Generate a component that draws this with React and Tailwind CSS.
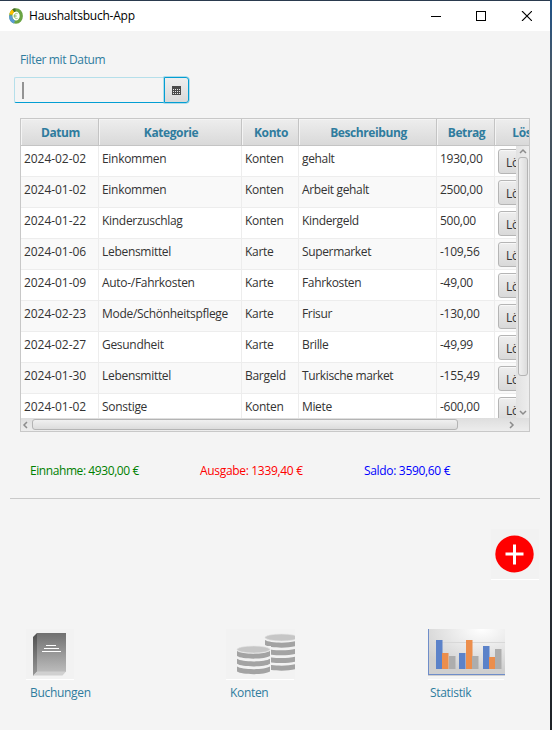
import React from "react";

const rows = [
  ["2024-02-02", "Einkommen", "Konten", "gehalt", "1930,00"],
  ["2024-01-02", "Einkommen", "Konten", "Arbeit gehalt", "2500,00"],
  ["2024-01-22", "Kinderzuschlag", "Konten", "Kindergeld", "500,00"],
  ["2024-01-06", "Lebensmittel", "Karte", "Supermarket", "-109,56"],
  ["2024-01-09", "Auto-/Fahrkosten", "Karte", "Fahrkosten", "-49,00"],
  ["2024-02-23", "Mode/Schönheitspflege", "Karte", "Frisur", "-130,00"],
  ["2024-02-27", "Gesundheit", "Karte", "Brille", "-49,99"],
  ["2024-01-30", "Lebensmittel", "Bargeld", "Turkische market", "-155,49"],
  ["2024-01-02", "Sonstige", "Konten", "Miete", "-600,00"],
];

const headers = ["Datum", "Kategorie", "Konto", "Beschreibung", "Betrag", "Löschen"];
const columns = "grid grid-cols-[78px_143px_57px_138px_58px_80px]";
const cellTracking = [
  "tracking-[-0.05px]",
  "tracking-[-0.3px]",
  "tracking-[-0.3px]",
  "tracking-[-0.35px]",
  "tracking-[-0.25px]",
];

function AppLogo() {
  return (
    <svg width="14" height="16" viewBox="0 0 14 16" className="shrink-0">
      <ellipse cx="7" cy="8" rx="5.3" ry="6.2" fill="#fff" stroke="#6aa443" strokeWidth="3.2" />
      <path d="M1.7 7.5A5.3 6.2 0 0 0 5.5 14" fill="none" stroke="#5b9bd5" strokeWidth="3.2" />
      <path d="M1.9 6.5A5.3 6.2 0 0 1 4.3 2.6" fill="none" stroke="#ffc000" strokeWidth="3.2" />
      <path d="M4.3 2.6A5.3 6.2 0 0 1 6.5 1.8" fill="none" stroke="#43682b" strokeWidth="3.2" />
      <path d="M8.7 5.7C6.4 4.6 5.4 6.3 5.4 8s1 3.4 3.3 2.3M4.6 7.3h3M4.6 8.7h3" fill="none" stroke="#8cb96c" strokeWidth=".8" />
    </svg>
  );
}

function TitleBar() {
  return (
    <header className="flex h-[31px] shrink-0 items-center border-t border-[#2a3a4e] bg-white pl-[9px] pr-[18px]">
      <AppLogo />
      <h1 className="ml-[6px] text-[12px] leading-4 tracking-[-0.22px] text-black">Haushaltsbuch-App</h1>
      <svg className="ml-auto" width="101" height="10" viewBox="0 0 101 10" fill="none" stroke="#000">
        <path d="M0 5.5h10" shapeRendering="crispEdges" />
        <path d="M45.5.5h9v9h-9z" shapeRendering="crispEdges" />
        <path d="M91 0l10 10M101 0L91 10" strokeWidth="1.1" />
      </svg>
    </header>
  );
}

function DatePicker() {
  return (
    <div className="ml-[14px] mt-[8px] flex h-[26px] w-[175px]">
      <div className="flex w-[150px] items-center rounded-l-[2px] border-b border-l border-t border-b-[#039ed3] border-l-[#b5dfea] border-t-[#b5dfea] pl-[7px]">
        <span className="h-[17px] w-[2px] bg-[#939393]" />
      </div>
      <button className="flex w-[25px] items-center justify-center rounded-r-[3px] border border-[#039ed3] bg-linear-to-b from-[#eeeeee] to-[#d9d9d9] shadow-[0_0_0_0.5px_#6cc4df]">
        <svg width="9" height="9" viewBox="0 0 9 9" shapeRendering="crispEdges">
          <path d="M0 0h9v9H0z" fill="#4a4a4a" />
          <path d="M1 3h1v1H1zM3 3h1v1H3zM5 3h1v1H5zM7 3h1v1H7zM1 5h1v1H1zM3 5h1v1H3zM5 5h1v1H5zM7 5h1v1H7zM1 7h1v1H1zM3 7h1v1H3zM5 7h1v1H5zM7 7h1v1H7z" fill="#e6e6e6" />
        </svg>
      </button>
    </div>
  );
}

function Chevron({ d }) {
  return (
    <svg width="8" height="8" viewBox="0 0 8 8" fill="none" stroke="#8c8c8c" strokeWidth="1.5" className="shrink-0">
      <path d={d} />
    </svg>
  );
}

function Table() {
  return (
    <section className="ml-5 mt-[15px] flex h-[314px] w-[510px] shrink-0 flex-col overflow-hidden border border-[#c8c8c8] bg-white">
      <div className={`${columns} h-[27px] w-[554px] shrink-0 text-[12px] font-bold text-[#2f7c9e]`}>
        {headers.map((h) => (
          <div key={h} className="flex items-center justify-center border-b border-r border-[#c4c4c4] bg-linear-to-b from-[#eeeeee] to-[#d9d9d9] pl-[2px] pt-[2px] tracking-[-0.4px] shadow-[inset_1px_1px_0_#f4f4f4]">
            {h}
          </div>
        ))}
      </div>
      <div className="flex h-[272px] shrink-0">
        <div className="w-[495px] overflow-hidden text-[12px] text-[#333]">
          {rows.map((row, i) => (
            <div key={i} className={`${columns} h-[31px] w-[554px] ${i % 2 ? "bg-[#f9f9f9]" : "bg-white"}`}>
              {row.map((cell, j) => (
                <div key={j} className={`whitespace-nowrap border-b border-r border-[#ededed] pl-[3px] pt-[4px] leading-[18px] ${cellTracking[j]}`}>
                  {cell}
                </div>
              ))}
              <div className="border-b border-[#ededed] pl-[3px] pt-[3px]">
                <button className="h-[25px] w-[60px] rounded-[3px] border border-[#b5b5b5] bg-linear-to-b from-[#eeeeee] to-[#d9d9d9] pl-[7px] text-left leading-[25px] tracking-[-0.2px] shadow-[inset_0_1px_0_#f8f8f8]">
                  Löschen
                </button>
              </div>
            </div>
          ))}
        </div>
        <div className="flex w-[13px] flex-col items-center bg-linear-to-r from-[#e2e2e2] to-[#ededed] pt-[1px]">
          <Chevron d="M1 6l3-3 3 3" />
          <div className="mt-[2px] h-[219px] w-[10px] rounded-[3px] border border-[#b4b4b4] bg-linear-to-r from-[#f0f0f0] to-[#dcdcdc]" />
          <div className="mb-px mt-auto flex">
            <Chevron d="M1 2l3 3 3-3" />
          </div>
        </div>
      </div>
      <div className="flex h-[13px] shrink-0 items-center bg-linear-to-b from-[#dedede] to-[#ededed]">
        <Chevron d="M6 1L3 4l3 3" />
        <div className="ml-[3px] h-[11px] w-[426px] rounded-[3px] border border-[#b4b4b4] bg-linear-to-b from-[#f0f0f0] to-[#dcdcdc]" />
        <div className="ml-auto mr-[13px] flex">
          <Chevron d="M2 1l3 3-3 3" />
        </div>
      </div>
    </section>
  );
}

function Summary() {
  return (
    <div className="mt-[30px] flex h-[18px] shrink-0 whitespace-nowrap pl-[30px] text-[12px] leading-[18px] tracking-[-0.32px]">
      <span className="w-[170px] tracking-[-0.42px] text-[#008000]">Einnahme: 4930,00 €</span>
      <span className="w-[164px] text-[#ff0000]">Ausgabe: 1339,40 €</span>
      <span className="text-[#0000ff]">Saldo: 3590,60 €</span>
    </div>
  );
}

function AddButton() {
  return (
    <button className="ml-[491px] mt-[30px] flex h-[51px] w-[48px] shrink-0 items-center justify-center border-b border-white bg-[#f2f2f2]">
      <svg width="40" height="40" viewBox="0 0 40 40" className="-mt-px">
        <ellipse cx="19.5" cy="20" rx="19.2" ry="18.5" fill="#f00" />
        <path d="M10.5 20h18M19.5 10.5v20" stroke="#fff" strokeWidth="3" />
      </svg>
    </button>
  );
}

function BookIcon() {
  return (
    <svg width="48" height="51" viewBox="0 0 48 51">
      <defs>
        <linearGradient id="cover" x1="0" y1="0" x2="0" y2="1">
          <stop stopColor="#707070" />
          <stop offset="1" stopColor="#bcbcbc" />
        </linearGradient>
        <linearGradient id="spine" x1="0" y1="0" x2="0" y2="1">
          <stop stopColor="#505050" />
          <stop offset="1" stopColor="#979797" />
        </linearGradient>
      </defs>
      <path d="M0 0h48v50H0z" fill="#f2f2f2" />
      <path d="M0 50h48v1H0z" fill="#fff" />
      <path d="M7 8l4-4v39l-4 4z" fill="url(#spine)" />
      <path d="M11 4h29v39H11z" fill="url(#cover)" />
      <path d="M11 42.500h29l-3.500 4H7z" fill="#d0d0d0" />
      <path d="M20 16.500h10M18 19.500h15M16 22.500h19" stroke="#fff" />
    </svg>
  );
}

function CoinStack({ x, y, layers, first, pitch }) {
  return (
    <g transform={`translate(${x} ${y})`}>
      {Array.from({ length: layers }, (_, i) => (
        <path
          key={i}
          d="M0 0C5 3.500 28 3.500 33 0V5C28 8.500 5 8.500 0 5z"
          transform={`translate(0 ${first + i * pitch})`}
          fill="#a3a3a3"
        />
      ))}
      <ellipse cx="16.500" cy="3.500" rx="16.500" ry="3.500" fill="#c6c6c6" stroke="#e6e6e6" strokeWidth=".6" />
    </g>
  );
}

function CoinsIcon() {
  return (
    <svg width="70" height="51" viewBox="0 0 70 51">
      <path d="M0 0h69v50H0z" fill="#f2f2f2" />
      <path d="M0 50h68v1H0z" fill="#fff" />
      <svg width="69" height="50">
        <CoinStack x={39} y={5} layers={4} first={6} pitch={7.7} />
        <path d="M11 17h34v30H11z" fill="#f2f2f2" />
        <CoinStack x={11} y={17} layers={3} first={5} pitch={7.8} />
      </svg>
    </svg>
  );
}

function ChartIcon() {
  const bars = [
    [8, 11, "#5b82c9"], [14, 24, "#ec8e4c"], [21, 27, "#adadad"],
    [31, 24, "#5b82c9"], [38, 11, "#ec8e4c"], [44, 27, "#adadad"],
    [55, 17, "#5b82c9"], [61, 28, "#ec8e4c"], [67, 20, "#adadad"],
  ];
  return (
    <svg width="78" height="51" viewBox="0 0 78 51">
      <defs>
        <radialGradient id="plot" cx=".7" cy="0" r=".9">
          <stop stopColor="#fff" />
          <stop offset="1" stopColor="#cfcfcf" />
        </radialGradient>
      </defs>
      <path d="M0 0h77v47H0z" fill="url(#plot)" />
      <path d="M6 13.500h71" stroke="#d8d8d8" />
      {bars.map(([x, y, fill]) => (
        <rect key={x} x={x} y={y} width="6.500" height={40 - y} fill={fill} />
      ))}
      <path d="M.5 0v46M0 45.500h77" stroke="#6f8dc9" fill="none" />
      <path d="M0 50h76v1H0z" fill="#fff" />
    </svg>
  );
}

function NavItem({ label, className, children }) {
  return (
    <button className={`flex flex-col items-start text-left ${className}`}>
      {children}
      <span className="ml-[4px] mt-[4px] text-[12px] leading-[18px] tracking-[-0.32px] text-[#2f7c9e]">{label}</span>
    </button>
  );
}

export default function App() {
  return (
    <div className="flex h-[730px] w-[552px] bg-[#354048] font-['Open_Sans','Noto_Sans',sans-serif]">
      <main className="flex w-[550px] flex-col bg-[#f4f4f4]">
        <TitleBar />
        <p className="ml-5 mt-5 text-[12px] leading-[18px] tracking-[-0.35px] text-[#2f7c9e]">Filter mit Datum</p>
        <DatePicker />
        <Table />
        <Summary />
        <hr className="mx-[10px] mt-[18px] shrink-0 border-[#c9c9c9]" />
        <AddButton />
        <nav className="mt-[49px] flex">
          <NavItem label="Buchungen" className="ml-[26px] w-[200px]">
            <BookIcon />
          </NavItem>
          <NavItem label="Konten" className="w-[200px]">
            <CoinsIcon />
          </NavItem>
          <NavItem label="Statistik">
            <span className="ml-[2px] flex"><ChartIcon /></span>
          </NavItem>
        </nav>
      </main>
      <aside className="w-[2px] bg-linear-to-b from-[#1b5288] via-[#495865] via-10% to-[#1f2328]" />
    </div>
  );
}
